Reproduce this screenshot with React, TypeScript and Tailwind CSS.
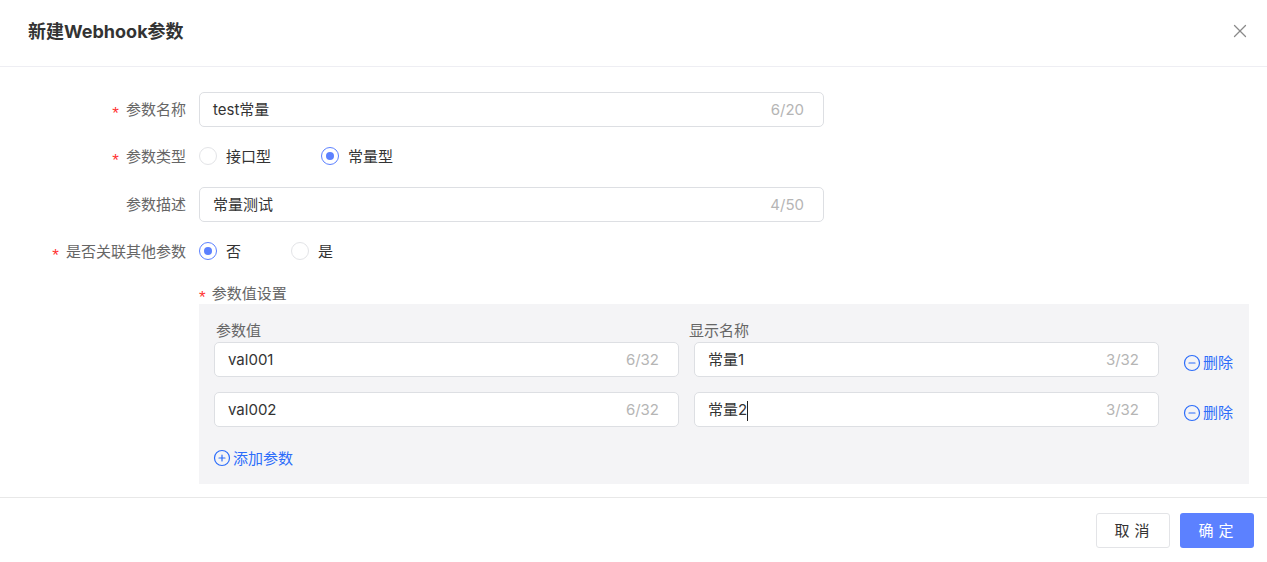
import { CircleMinus, CirclePlus, X } from 'lucide-react'

const fontStack = "font-['Inter','Noto_Sans_CJK_SC',sans-serif]"

function Star() {
  return <span className="text-[#ff3333] mr-[7px] text-[17px] leading-none font-['Liberation_Sans',sans-serif] translate-y-[4px]">*</span>
}

function Label({ text, required }: { text: string; required?: boolean }) {
  return (
    <div className="w-[186px] shrink-0 flex items-center justify-end text-[15px] text-[#666666]">
      {required && <Star />}
      <span className="pt-[2px]">{text}</span>
    </div>
  )
}

function TextInput({ value, count, width, caret }: { value: string; count: string; width: string; caret?: boolean }) {
  return (
    <div className={`${width} h-[35px] shrink-0 flex items-center justify-between bg-white border border-[#dddfe3] rounded-[5px] pl-[13px] text-[15px] text-[#333333]`}>
      <span className="flex items-center pt-[2px]">
        {value}
        {caret && <span className="w-px h-[20px] bg-[#222222]" />}
      </span>
      <span className="text-[#b5b5b5] pt-[2px]">{count}</span>
    </div>
  )
}

function Radio({ label, checked, width }: { label: string; checked?: boolean; width: string }) {
  return (
    <div className={`${width} flex items-center text-[15px] text-[#333333]`}>
      {checked ? (
        <span className="w-[18px] h-[18px] rounded-full border border-[#5c81ff] flex items-center justify-center bg-white">
          <span className="w-[8px] h-[8px] rounded-full bg-[#5c81ff]" />
        </span>
      ) : (
        <span className="w-[18px] h-[18px] rounded-full border border-[#e3e4e7] bg-white" />
      )}
      <span className="ml-[9px] pt-[2px]">{label}</span>
    </div>
  )
}

function ParamRow({ value, name, caret }: { value: string; name: string; caret?: boolean }) {
  return (
    <div className="flex items-center">
      <TextInput value={value} count="6/32" width="w-[465px] pr-[19px]" />
      <div className="ml-[15px]">
        <TextInput value={name} count="3/32" width="w-[465px] pr-[19px]" caret={caret} />
      </div>
      <button className="ml-[24px] mt-[6px] flex items-center gap-[2px] text-[15px] text-[#2c6dfa]">
        <CircleMinus size={18} strokeWidth={1.6} />
        <span className="pt-[2px]">删除</span>
      </button>
    </div>
  )
}

export default function App() {
  return (
    <div className={`w-[1267px] h-[562px] bg-white overflow-hidden ${fontStack}`}>
      <header className="h-[67px] border-b border-[#eeeef3] flex items-center justify-between pl-[28px] pr-[16px] pb-[2px]">
        <h1 className="text-lg font-bold text-[#333333]">新建Webhook参数</h1>
        <X size={22} strokeWidth={1.4} className="text-[#8a8a8a] mb-[2px]" />
      </header>

      <main className="h-[430px] pt-[25px] flex flex-col">
        <div className="flex h-[35px] gap-[13px]">
          <Label text="参数名称" required />
          <TextInput value="test常量" count="6/20" width="w-[625px] pr-[19px]" />
        </div>
        <div className="flex h-[18px] gap-[13px] mt-[20px]">
          <Label text="参数类型" required />
          <div className="flex">
            <Radio label="接口型" width="w-[122px]" />
            <Radio label="常量型" checked width="w-[100px]" />
          </div>
        </div>
        <div className="flex h-[35px] gap-[13px] mt-[22px]">
          <Label text="参数描述" />
          <TextInput value="常量测试" count="4/50" width="w-[625px] pr-[19px]" />
        </div>
        <div className="flex h-[18px] gap-[13px] mt-[20px]">
          <Label text="是否关联其他参数" required />
          <div className="flex">
            <Radio label="否" checked width="w-[92px]" />
            <Radio label="是" width="w-[60px]" />
          </div>
        </div>

        <div className="ml-[199px] mt-[24px] w-[1050px]">
          <div className="h-[20px] flex items-center text-[15px] text-[#666666]">
            <span className="text-[#ff3333] mr-[6px] text-[17px] leading-none font-['Liberation_Sans',sans-serif] translate-y-[3px]">*</span>
            <span>参数值设置</span>
          </div>
          <div className="h-[180px] bg-[#f4f4f6] pl-[15px] pt-[17px]">
            <div className="flex h-[21px] text-[15px] text-[#666666] leading-[20px]">
              <span className="ml-[2px] w-[473px]">参数值</span>
              <span>显示名称</span>
            </div>
            <ParamRow value="val001" name="常量1" />
            <div className="mt-[15px]">
              <ParamRow value="val002" name="常量2" caret />
            </div>
            <button className="mt-[19px] -ml-[1px] flex items-center gap-[2px] text-[15px] text-[#2c6dfa]">
              <CirclePlus size={18} strokeWidth={1.6} />
              <span className="pt-[2px]">添加参数</span>
            </button>
          </div>
        </div>
      </main>

      <footer className="h-[65px] border-t border-[#e8e8e8] flex justify-end gap-[10px] pt-[15px] pr-[13px]">
        <button className="w-[74px] h-[35px] rounded-[3px] bg-white border border-[#e3e4e7] text-[15px] text-[#333333] tracking-[5px] pl-[3px] pt-[2px]">取消</button>
        <button className="w-[74px] h-[35px] rounded-[3px] bg-[#5c81ff] text-[15px] text-white tracking-[5px] pl-[3px] pt-[2px]">确定</button>
      </footer>
    </div>
  )
}
